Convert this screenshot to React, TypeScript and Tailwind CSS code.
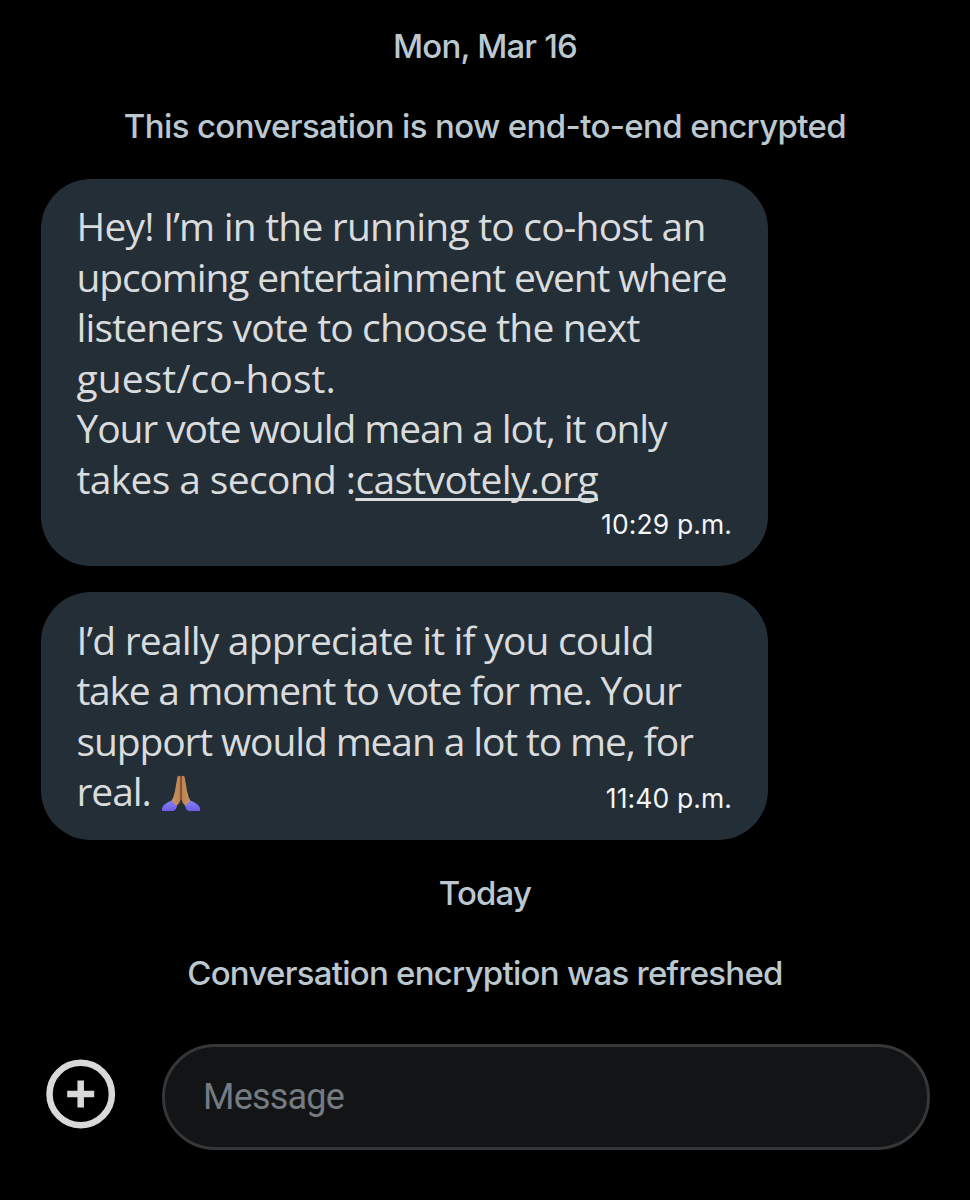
import React from "react";

interface Line {
  text: string;
  tracking: string;
  link?: string;
}

interface NoticeProps {
  className: string;
  children: React.ReactNode;
}

const firstMessage: Line[] = [
  { text: "Hey! I’m in the running to co-host an", tracking: "tracking-[-0.8px]" },
  { text: "upcoming entertainment event where", tracking: "tracking-[-1.15px]" },
  { text: "listeners vote to choose the next", tracking: "tracking-[-0.85px]" },
  { text: "guest/co-host.", tracking: "tracking-[0.05px]" },
  { text: "Your vote would mean a lot, it only", tracking: "tracking-[-1.12px]" },
  { text: "takes a second :", tracking: "tracking-[-0.65px]", link: "castvotely.org" },
];

const secondMessage: Line[] = [
  { text: "I’d really appreciate it if you could", tracking: "tracking-[-0.82px]" },
  { text: "take a moment to vote for me. Your", tracking: "tracking-[-1.29px]" },
  { text: "support would mean a lot to me, for", tracking: "tracking-[-1.14px]" },
];

const Notice = ({ className, children }: NoticeProps) => (
  <p className={`text-center font-['Inter',sans-serif] text-[33px] leading-10 font-medium whitespace-nowrap text-[#bbc8cf] ${className}`}>
    {children}
  </p>
);

const MessageLine = ({ text, tracking, link }: Line) => (
  <span className={`block ${tracking}`}>
    {text}
    {link && (
      <a className="underline decoration-[3px] underline-offset-[4px] [text-decoration-skip-ink:none]">{link}</a>
    )}
  </span>
);

const PrayingHands = () => (
  <svg className="h-[37px] w-[40px]" viewBox="0 0 40 37">
    <defs>
      <linearGradient id="sleeve" x1="0" y1="0" x2="0" y2="1">
        <stop offset="0" stopColor="#8583f5" />
        <stop offset="1" stopColor="#6f5ae8" />
      </linearGradient>
      <linearGradient id="skin" x1="0" y1="0" x2="1" y2="0">
        <stop offset="0" stopColor="#cc9464" />
        <stop offset="0.42" stopColor="#c08654" />
        <stop offset="0.5" stopColor="#6b3f20" />
        <stop offset="0.58" stopColor="#c08654" />
        <stop offset="1" stopColor="#cc9464" />
      </linearGradient>
    </defs>
    <path
      d="M16.500 1.500Q18.500 0 20 1.500Q21.500 0 23.500 1.500L26 16Q27 22 30 27L25 31.500Q21.500 29 20 24Q18.500 29 15 31.500L10 27Q13 22 14 16Z"
      fill="url(#skin)"
    />
    <path d="M1 36Q0.500 32 3 30Q6.500 26.500 11 25.500Q12.500 29 16 31Q15.500 34.500 12.500 36Z" fill="url(#sleeve)" />
    <path d="M39 36Q39.500 32 37 30Q33.500 26.500 29 25.500Q27.500 29 24 31Q24.500 34.500 27.500 36Z" fill="url(#sleeve)" />
  </svg>
);

const PlusCircle = () => (
  <svg className="h-[70px] w-[70px]" viewBox="0 0 70 70" fill="none" stroke="#d9d9d9" strokeWidth="6.500">
    <circle cx="34.700" cy="35" r="31.200" />
    <path d="M34.700 21.500V48.500M21.200 35H48.200" />
  </svg>
);

const bubble =
  "w-[727px] rounded-[50px] bg-[#242e36] pr-[35.5px] pl-9 font-['Open_Sans',sans-serif] text-[39px] leading-[50.6px] whitespace-nowrap text-[#d9dbdd]";
const time = "font-['Inter',sans-serif] text-[26.5px] leading-8 text-[#f2f5f7] tracking-[0.1px]";

const App = () => {
  return (
    <div className="flex h-[1200px] w-[970px] flex-col overflow-hidden bg-black">
      <Notice className="mt-[26px] tracking-[-0.85px]">Mon, Mar 16</Notice>
      <Notice className="mt-10 tracking-[-0.64px]">This conversation is now end-to-end encrypted</Notice>

      <div className="mt-[33px] flex flex-col gap-[26px] pl-[40.5px]">
        <div className={`${bubble} h-[387px] pt-[22px]`}>
          {firstMessage.map((line) => (
            <MessageLine key={line.text} {...line} />
          ))}
          <p className={`${time} mt-[3px] text-right`}>10:29 p.m.</p>
        </div>
        <div className={`${bubble} h-[248px] pt-[22.5px]`}>
          {secondMessage.map((line) => (
            <MessageLine key={line.text} {...line} />
          ))}
          <div className="flex items-start">
            <span className="tracking-[-1.1px]">real.</span>
            <span className="mt-[9px] ml-[10.5px]">
              <PrayingHands />
            </span>
            <span className={`${time} mt-4 ml-auto`}>11:40 p.m.</span>
          </div>
        </div>
      </div>

      <Notice className="mt-[33px] tracking-[-0.85px]">Today</Notice>
      <Notice className="mt-10 tracking-[-0.75px]">Conversation encryption was refreshed</Notice>

      <div className="mt-[51px] flex items-center pl-[46px]">
        <div className="-mt-[6px]">
          <PlusCircle />
        </div>
        <div className="ml-[46px] flex h-[106px] w-[768px] items-center rounded-full border-3 border-[#343638] bg-[#121416] pl-[38px] font-['Roboto',sans-serif] text-[36px] tracking-[-0.8px] text-[#757b83]">
          Message
        </div>
      </div>
    </div>
  );
};

export default App;
